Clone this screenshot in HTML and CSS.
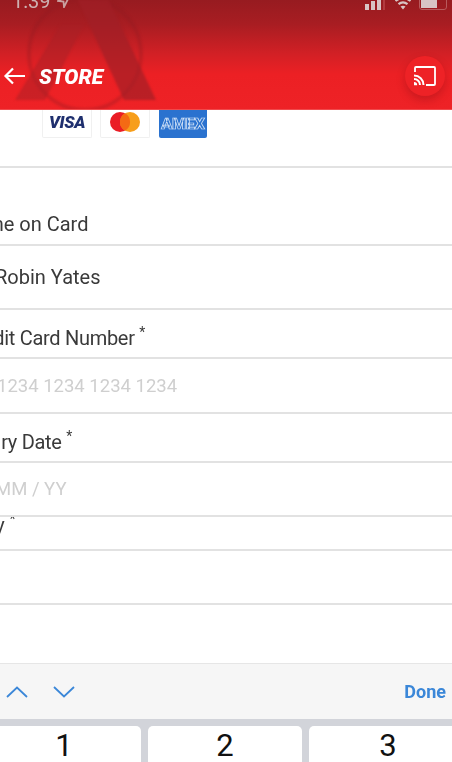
FILE: index.html
```html
<!DOCTYPE html>
<html lang="en">
<head>
    <meta charset="UTF-8">
    <meta name="viewport" content="width=device-width, initial-scale=1.0">
    <title>Store - Payment</title>
    <link rel="stylesheet" href="styles.css">
</head>
<body>
    <header class="app-header">
        <svg class="watermark" width="170" height="110" viewBox="0 0 170 110">
            <circle cx="85" cy="54" r="56" fill="none" stroke="#8f1a20" stroke-opacity="0.3" stroke-width="4"/>
            <path d="M60 25 L84 25 L45 100 L15 100 Z" fill="#a81f26" fill-opacity="0.5"/>
            <path d="M74 -8 L105 -8 L156 100 L124 100 Z" fill="#a01f26" fill-opacity="0.68"/>
        </svg>
        <div class="status-bar">
            <div class="status-time">
                <span>1:39</span>
                <svg width="14" height="14" viewBox="0 0 14 14"><path d="M13 1 L1 7 L6.500 7.500 L7 13 Z" fill="none" stroke="#c9a0a0" stroke-width="1.800"/></svg>
            </div>
            <div class="status-icons">
                <svg width="22" height="14" viewBox="0 0 22 14">
                    <rect x="0" y="8" width="4" height="6" fill="#d8c4c4"/>
                    <rect x="6" y="5" width="4" height="9" fill="#d8c4c4"/>
                    <rect x="12" y="1" width="4" height="13" fill="#d8c4c4"/>
                    <rect x="18" y="0" width="2" height="14" fill="#b23a3e"/>
                </svg>
                <svg width="16" height="14" viewBox="0 0 16 14">
                    <path d="M0.500 5 Q8 -1.500 15.500 5" fill="none" stroke="#d8c4c4" stroke-width="2.200"/>
                    <path d="M3.500 8.200 Q8 4.500 12.500 8.200" fill="none" stroke="#d8c4c4" stroke-width="2.200"/>
                    <path d="M5.500 10.500 Q8 8.800 10.500 10.500 L8 13.500 Z" fill="#d8c4c4"/>
                </svg>
                <div class="battery"><div class="battery-level"></div></div>
            </div>
        </div>
        <div class="nav-row">
            <svg class="back-icon" width="24" height="20" viewBox="0 0 24 20"><path d="M22 10 L3 10 M10 2.500 L2.500 10 L10 17.500" fill="none" stroke="#fff" stroke-width="2.200"/></svg>
            <h1 class="nav-title">STORE</h1>
            <button class="cast-btn">
                <svg width="24" height="20" viewBox="0 0 24 20">
                    <path d="M2 6 V2 a1 1 0 0 1 1 -1 H21 a1 1 0 0 1 1 1 V18 a1 1 0 0 1 -1 1 H13" fill="none" stroke="#fff" stroke-width="1.800"/>
                    <path d="M1 9.500 a9.500 9.500 0 0 1 9.500 9.500 M1 13 a6 6 0 0 1 6 6" fill="none" stroke="#fff" stroke-width="2"/>
                    <path d="M1 16 a3.200 3.200 0 0 1 3.200 3.200 H1 Z" fill="#fff"/>
                </svg>
            </button>
        </div>
    </header>

    <main class="form-page">
        <div class="card-logos">
            <div class="card-logo"><span class="visa">VISA</span></div>
            <div class="card-logo">
                <svg width="32" height="22" viewBox="0 0 32 22">
                    <circle cx="11" cy="11" r="10" fill="#ea1d25"/>
                    <circle cx="21" cy="11" r="10" fill="#f79e1b"/>
                    <path d="M16 2.300 a10 10 0 0 1 0 17.400 a10 10 0 0 1 0 -17.400 Z" fill="#f46a14"/>
                </svg>
            </div>
            <div class="card-logo amex"><span class="amex-text">AMEX</span></div>
        </div>

        <div class="field-row label-row name-label"><span class="field-text">Name on Card</span></div>
        <div class="field-row value-row name-value"><span class="field-text">Robin Yates</span></div>
        <div class="field-row label-row number-label"><span class="field-text">Credit Card Number <sup>*</sup></span></div>
        <div class="field-row value-row number-value"><span class="field-text placeholder">1234 1234 1234 1234</span></div>
        <div class="field-row label-row expiry-label"><span class="field-text">Expiry Date <sup>*</sup></span></div>
        <div class="field-row value-row expiry-value"><span class="field-text placeholder">MM / YY</span></div>
        <div class="field-row label-row cvv-label"><span class="field-text">Security <sup>*</sup></span></div>
        <div class="field-row value-row cvv-value"></div>
    </main>

    <div class="kb-toolbar">
        <div class="kb-arrows">
            <svg width="24" height="14" viewBox="0 0 24 14"><path d="M2 12 L12 2.500 L22 12" fill="none" stroke="#3b87d8" stroke-width="1.800"/></svg>
            <svg width="24" height="14" viewBox="0 0 24 14"><path d="M2 2 L12 11.500 L22 2" fill="none" stroke="#3b87d8" stroke-width="1.800"/></svg>
        </div>
        <span class="kb-done">Done</span>
    </div>
    <div class="keyboard">
        <div class="key">1</div>
        <div class="key">2</div>
        <div class="key">3</div>
    </div>
</body>
</html>
```

FILE: styles.css
```css
* {
    margin: 0;
    padding: 0;
    box-sizing: border-box;
}

html, body {
    height: 100%;
}

body {
    width: 452px;
    height: 762px;
    overflow: hidden;
    background: #fff;
    font-family: Roboto, 'Liberation Sans', sans-serif;
    color: #333;
    display: flex;
    flex-direction: column;
}

/* Red header */
.app-header {
    position: relative;
    flex: none;
    height: 110px;
    overflow: hidden;
    background: linear-gradient(180deg, #971b20 0%, #a81d22 22%, #d32025 50%, #ec2024 68%, #ee2226 100%);
    border-bottom: 1px solid #f04a4c;
}

.watermark {
    position: absolute;
    top: 0;
    left: 0;
    filter: blur(1.2px);
}

.status-bar {
    position: relative;
    display: flex;
    justify-content: space-between;
    align-items: flex-end;
    height: 18px;
    margin-top: -8px;
    padding: 0 5px 0 12px;
    filter: blur(0.5px);
}

.status-time {
    display: flex;
    align-items: center;
    gap: 6px;
    color: #cdb0b0;
    font-size: 20px;
    line-height: 18px;
}

.status-icons {
    display: flex;
    align-items: flex-end;
    gap: 8px;
}

.battery {
    width: 28px;
    height: 14px;
    border: 1px solid #b85a5c;
    border-radius: 3px;
    padding: 1px;
}

.battery-level {
    width: 16px;
    height: 100%;
    background: #d8c4c4;
}

.nav-row {
    position: relative;
    display: flex;
    align-items: center;
    height: 40px;
    margin-top: 46px;
    padding: 0 7px 0 3px;
}

.back-icon {
    filter: blur(0.4px);
}

.nav-title {
    margin: 2px 0 0 12px;
    color: #fff;
    font-size: 21px;
    font-weight: 900;
    font-style: italic;
    filter: blur(0.4px);
}

.cast-btn {
    display: flex;
    align-items: center;
    justify-content: center;
    width: 40px;
    height: 40px;
    margin-left: auto;
    border: none;
    border-radius: 50%;
    background: #ee2226;
    box-shadow: 0 4px 9px rgba(120, 10, 15, 0.3);
}

/* Form */
.form-page {
    flex: none;
    height: 553px;
    overflow: hidden;
}

.card-logos {
    display: flex;
    gap: 8px;
    height: 58px;
    padding-left: 42px;
    border-bottom: 2px solid #e2e2e2;
}

.card-logo {
    display: flex;
    align-items: center;
    justify-content: center;
    width: 50px;
    height: 28px;
    padding-bottom: 3px;
    border: 1px solid #f0f0f0;
    border-top: none;
    border-radius: 0 0 2px 2px;
    filter: blur(0.4px);
}

.visa {
    color: #1f2f6e;
    font-size: 17px;
    font-weight: 900;
    font-style: italic;
    letter-spacing: -0.3px;
}

.amex {
    width: 48px;
    margin-left: 1px;
    padding-bottom: 0;
    border: none;
    background: #2a72cf;
}

.amex-text {
    color: #2a72cf;
    font-size: 14px;
    font-weight: 900;
    letter-spacing: -0.2px;
    -webkit-text-stroke: 0.7px #cfe0f6;
    transform: scaleX(1.15);
}

.field-row {
    display: flex;
    align-items: center;
    border-bottom: 2px solid #e2e2e2;
    overflow: hidden;
}

.field-text {
    flex: none;
    font-size: 20px;
    color: #3a3a3a;
    filter: blur(0.3px);
}

.field-text sup {
    font-size: 14px;
    line-height: 0;
    vertical-align: 8px;
}

.field-text.placeholder {
    color: #cfcfcf;
    font-size: 18.5px;
}

.name-label { height: 78px; padding-top: 36px; }
.name-value { height: 64px; }
.number-label { height: 49px; padding-top: 8px; }
.number-value { height: 55px; }
.expiry-label { height: 49px; padding-top: 8px; }
.expiry-value { height: 54px; }
.cvv-label { height: 34px; padding-bottom: 16px; }
.cvv-value { height: 54px; }

.number-label .field-text,
.expiry-label .field-text {
    letter-spacing: -0.3px;
}

.name-label .field-text { margin-left: -39px; }
.name-value .field-text { margin-left: -5px; }
.number-label .field-text { margin-left: -36px; }
.number-value .field-text { margin-left: -3px; }
.expiry-label .field-text { margin-left: -35px; }
.expiry-value .field-text { margin-left: -5px; }
.cvv-label .field-text { margin-left: -67px; }

/* Keyboard */
.kb-toolbar {
    flex: none;
    display: flex;
    justify-content: space-between;
    align-items: center;
    height: 56px;
    padding: 0 6px 0 5px;
    background: #f6f6f6;
    border-top: 1px solid #e6e6e6;
}

.kb-arrows {
    display: flex;
    gap: 23px;
}

.kb-done {
    color: #3b87d8;
    font-size: 18px;
    font-weight: 700;
    filter: blur(0.3px);
}

.keyboard {
    flex: 1;
    display: flex;
    gap: 7px;
    padding-top: 7px;
    background: #d2d4da;
    overflow: hidden;
}

.key {
    flex: none;
    display: flex;
    justify-content: center;
    width: 154px;
    height: 60px;
    padding-top: 2px;
    border-radius: 5px;
    background: #fff;
    color: #111;
    font-size: 31px;
    line-height: 36px;
}

.key:first-child {
    margin-left: -13px;
}

.key:last-child {
    width: 158px;
}
```
